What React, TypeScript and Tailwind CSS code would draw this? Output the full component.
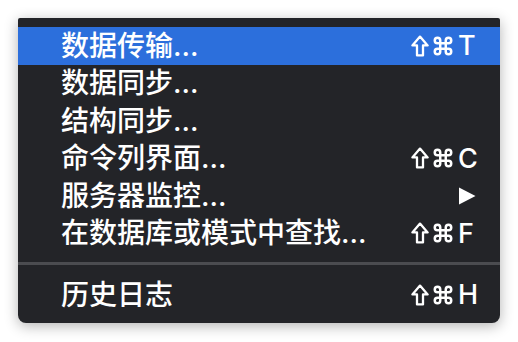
import React from "react";

function ShiftIcon() {
  return (
    <svg width="18" height="22" viewBox="0 0 18 22" className="block">
      <path d="M9 1.6 L16.6 10.4 H12 V20.4 H6 V10.4 H1.4 Z" fill="none" stroke="white" strokeWidth="2.3" strokeLinejoin="round" />
    </svg>
  );
}

function CmdIcon() {
  return (
    <svg width="22" height="22" viewBox="0 0 24 24" className="block">
      <path
        d="M15 6v12a3 3 0 1 0 3-3H6a3 3 0 1 0 3 3V6a3 3 0 1 0-3 3h12a3 3 0 1 0-3-3"
        fill="none"
        stroke="white"
        strokeWidth="2.7"
        strokeLinecap="round"
        strokeLinejoin="round"
      />
    </svg>
  );
}

function Arrow() {
  return (
    <svg width="18" height="18" viewBox="0 0 18 18" className="block">
      <path d="M1 0.5 L17.5 9 L1 17.5 Z" fill="white" />
    </svg>
  );
}

type Item = { label: string; key?: string; sub?: boolean; active?: boolean };

const items: Item[] = [
  { label: "数据传输...", key: "T", active: true },
  { label: "数据同步..." },
  { label: "结构同步..." },
  { label: "命令列界面...", key: "C" },
  { label: "服务器监控...", sub: true },
  { label: "在数据库或模式中查找...", key: "F" },
];

function Row({ item }: { item: Item }) {
  return (
    <div
      className={
        "flex items-center h-[37.5px] pl-[43px] pr-[18px] " +
        (item.active ? "bg-[#2c6fdc]" : "")
      }
    >
      <span className="flex-1 whitespace-nowrap">{item.label}</span>
      {item.key && (
        <div className="flex items-center">
          <ShiftIcon />
          <div className="w-[3px]" />
          <CmdIcon />
          <span className="w-[28px] pl-[4px] text-[27px] font-['Inter',sans-serif]">{item.key}</span>
        </div>
      )}
      {item.sub && (
        <div className="flex items-center w-[24px]">
          <Arrow />
        </div>
      )}
    </div>
  );
}

export default function App() {
  return (
    <div className="w-[518px] h-[342px] bg-white pt-[18px] pl-[18px]">
      <div className="w-[482px] h-[305px] bg-[#232428] rounded-b-[8px] rounded-t-[2px] shadow-[0_3px_14px_rgba(0,0,0,0.3)] text-white text-[28px] leading-none font-medium font-[family-name:Inter,'Noto_Sans_CJK_SC',sans-serif] pt-[9px]">
        {items.map((it) => (
          <Row key={it.label} item={it} />
        ))}
        <div className="h-[10px]" />
        <div className="h-[3px] bg-[#4b4c50]" />
        <div className="h-[11px]" />
        <Row item={{ label: "历史日志", key: "H" }} />
      </div>
    </div>
  );
}
